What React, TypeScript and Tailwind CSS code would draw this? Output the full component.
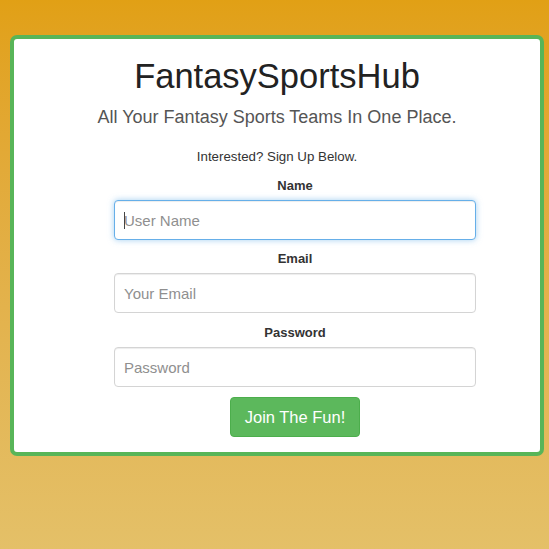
import { useState } from 'react';

// 报名表单：名字 / 邮箱 / 密码
const fields = [
  { label: 'Name', placeholder: 'User Name', type: 'text', focused: true },
  { label: 'Email', placeholder: 'Your Email', type: 'email', focused: false },
  { label: 'Password', placeholder: 'Password', type: 'password', focused: false },
];

export default function App() {
  const [values, setValues] = useState<Record<string, string>>({});

  return (
    <div
      className="min-h-[549px] w-full bg-linear-to-b from-[#e1a015] to-[#e4c068] pt-[35px] pl-[10px] pb-[94px]"
      style={{ fontFamily: '"Liberation Sans", Arial, Helvetica, sans-serif' }}
    >
      <div className="w-[534px] rounded-[7px] border-4 border-[#58b558] bg-white pt-[17px] pb-[15px]">
        <h1 className="text-center text-[34.5px] leading-[40px] font-normal text-[#222]">
          FantasySportsHub
        </h1>
        <p className="mt-[9px] text-center text-[18px] leading-[24px] text-[#555]">
          All Your Fantasy Sports Teams In One Place.
        </p>
        <p className="mt-[19px] text-center text-[13.3px] leading-[18px] text-[#333]">
          Interested? Sign Up Below.
        </p>

        <form
          className="ml-[100px] flex w-[362px] flex-col items-center"
          onSubmit={(e) => e.preventDefault()}
        >
          {fields.map((f, i) => (
            <div
              key={f.label}
              className={`${i === 1 ? 'mt-[10px]' : 'mt-[11px]'} flex w-full flex-col items-center`}
            >
              <label className="text-[13px] leading-[18px] font-bold text-[#333]">
                {f.label}
              </label>
              <div className="relative mt-[5px] w-full">
                <input
                  type={f.type}
                  placeholder={f.placeholder}
                  value={values[f.label] ?? ''}
                  onChange={(e) => setValues({ ...values, [f.label]: e.target.value })}
                  className={
                    f.focused
                      ? 'h-[40px] w-full rounded-[4px] border border-[#66afe9] bg-white px-[9px] text-[15px] text-[#555] shadow-[inset_0_1px_1px_rgba(0,0,0,0.075),0_0_6px_rgba(102,175,233,0.6)] outline-none placeholder:text-[#8f8f8f]'
                      : 'h-[40px] w-full rounded-[4px] border border-[#d4d4d4] bg-white px-[9px] text-[15px] text-[#555] shadow-[inset_0_1px_1px_rgba(0,0,0,0.075)] outline-none placeholder:text-[#8f8f8f]'
                  }
                />
                {f.focused && !values[f.label] && (
                  <span className="pointer-events-none absolute top-[12px] left-[10px] h-[17px] w-px bg-[#444]" />
                )}
              </div>
            </div>
          ))}

          <button
            type="submit"
            className="mt-[10px] h-[40px] w-[130px] rounded-[4px] border border-[#4cae4c] bg-[#5cb85c] text-[16.5px] text-white hover:bg-[#449d44]"
          >
            Join The Fun!
          </button>
        </form>
      </div>
    </div>
  );
}
